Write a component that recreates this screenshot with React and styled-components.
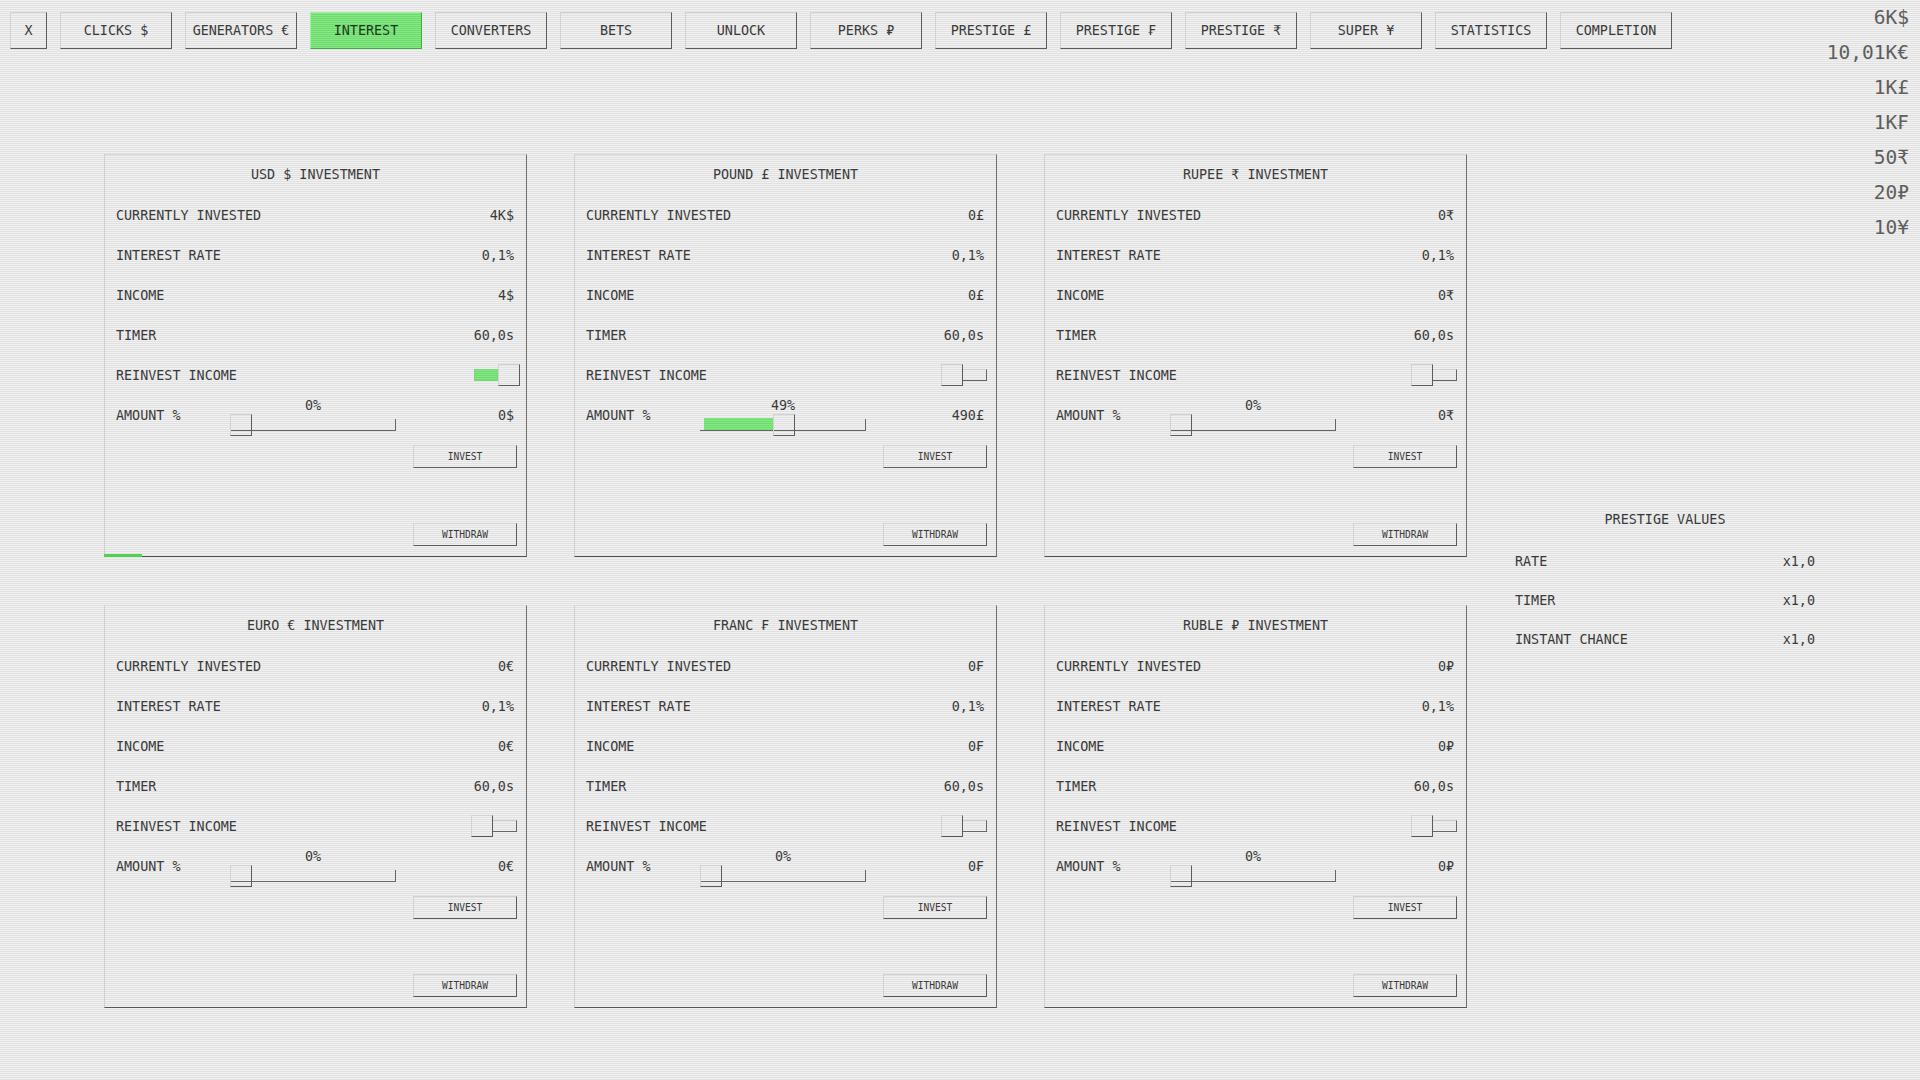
import React from "react";
import styled, { createGlobalStyle, css } from "styled-components";

const GlobalStyle = createGlobalStyle`
	html, body {
		margin: 0;
		padding: 0;
	}
	body {
		font-family: "DejaVu Sans Mono", "Liberation Mono", monospace;
		color: #3a3a3a;
		background: repeating-linear-gradient(
			to bottom,
			#f1f1f1 0px,
			#f1f1f1 1px,
			#e1e1e1 1px,
			#e1e1e1 2px
		);
		min-height: 100vh;
	}
`;

const bevel = css`
	border-top: 1px solid #d2d2d2;
	border-left: 1px solid #d2d2d2;
	border-right: 1px solid #5c5c5c;
	border-bottom: 1px solid #5c5c5c;
	box-sizing: border-box;
`;

const green = `repeating-linear-gradient(to bottom, #84e984 0px, #84e984 1px, #6fdb6f 1px, #6fdb6f 2px)`;

const Page = styled.div`
	display: flex;
	min-height: 1080px;
`;

const Main = styled.div`
	flex: 1;
	display: flex;
	flex-direction: column;
`;

const NavBar = styled.nav`
	display: flex;
	gap: 13px;
	padding: 12px 0 0 10px;
`;

const NavButton = styled.button`
	${bevel};
	width: ${props => props.$narrow ? '37px' : '112px'};
	height: 37px;
	padding: 0;
	font-family: inherit;
	font-size: 13.4px;
	color: #3a3a3a;
	background: ${props => props.$active ? green : 'transparent'};
	${props => props.$active && css`
		border-color: #9ef09e #3fae3f #3fae3f #9ef09e;
		color: #1c3a1c;
	`}
	cursor: pointer;
`;

const Content = styled.div`
	display: flex;
	align-items: center;
	margin-top: 105px;
	padding-left: 104px;
`;

const CardGrid = styled.div`
	display: grid;
	grid-template-columns: repeat(3, 423px);
	grid-auto-rows: 403px;
	column-gap: 47px;
	row-gap: 48px;
	flex-shrink: 0;
`;

const Card = styled.section`
	${bevel};
	border-top-color: #d8d8d8;
	border-left-color: #d0d0d0;
	border-right-color: #6e6e6e;
	border-bottom-color: #555;
	position: relative;
	display: flex;
	flex-direction: column;
	font-size: 13.4px;
`;

const CardTitle = styled.h4`
	margin: 0;
	height: 40px;
	line-height: 40px;
	text-align: center;
	font-weight: normal;
	font-size: 13.4px;
`;

const Row = styled.div`
	display: flex;
	justify-content: space-between;
	align-items: center;
	height: 40px;
	padding: 0 12px 0 11px;
`;

const AmountRow = styled.div`
	display: grid;
	grid-template-columns: 114px 166px 1fr;
	align-items: center;
	height: 40px;
	padding: 0 12px 0 11px;
`;

const Value = styled.span`
	text-align: right;
`;

const Toggle = styled.div`
	display: flex;
	align-items: center;
	width: 46px;
	height: 22px;
	margin-right: ${props => props.$on ? '-6px' : '-3px'};
	flex-direction: ${props => props.$on ? 'row' : 'row-reverse'};
`;

const ToggleTrack = styled.div`
	flex: 1;
	height: 12px;
	box-sizing: border-box;
	${props => props.$on
		? css`background: ${green}; border: 1px solid #7ad87a;`
		: css`border-top: 1px solid #cfcfcf; border-right: 1px solid #666; border-bottom: 1px solid #666;`}
`;

const Knob = styled.div`
	${bevel};
	width: 22px;
	height: 22px;
	flex-shrink: 0;
`;

const SliderBox = styled.div`
	display: flex;
	flex-direction: column;
	align-items: center;
	margin-top: 4px;
`;

const SliderPct = styled.span`
	line-height: 14px;
	height: 14px;
	margin-bottom: 1px;
`;

const Track = styled.div`
	position: relative;
	width: 166px;
	height: 22px;
`;

const TrackLine = styled.div`
	position: absolute;
	left: 0;
	right: 0;
	top: 5px;
	height: 12px;
	box-sizing: border-box;
	border-right: 1px solid #666;
	border-bottom: 1px solid #666;
`;

const TrackFill = styled.div`
	position: absolute;
	left: 4px;
	top: 4px;
	height: 12px;
	background: ${green};
`;

const SliderKnob = styled(Knob)`
	position: absolute;
	top: 0;
`;

const ButtonRow = styled.div`
	display: flex;
	justify-content: flex-end;
	padding-right: 9px;
	margin-top: ${props => props.$bottom ? 'auto' : '10px'};
	margin-bottom: ${props => props.$bottom ? '10px' : '0'};
`;

const SmallButton = styled.button`
	${bevel};
	width: 104px;
	height: 23px;
	padding: 0;
	background: transparent;
	font-family: inherit;
	font-size: 9.6px;
	color: #3a3a3a;
	cursor: pointer;
`;

const TimerBar = styled.div`
	position: absolute;
	left: -1px;
	bottom: -1px;
	height: 3px;
	background: #4fd24f;
`;

const PrestigePanel = styled.div`
	width: 320px;
	box-sizing: border-box;
	margin: 0 0 6px 38px;
	padding: 0 10px;
	font-size: 13.4px;
`;

const PanelTitle = styled.div`
	height: 44px;
	line-height: 44px;
	text-align: center;
`;

const PanelRow = styled.div`
	display: flex;
	justify-content: space-between;
	align-items: center;
	height: 39px;
`;

const Wallet = styled.aside`
	display: flex;
	flex-direction: column;
	align-items: flex-end;
	padding-right: 11px;
	font-size: 19.5px;
	color: #5e5e5e;
`;

const Coin = styled.div`
	line-height: 35px;
	height: 35px;
`;

const tabs = ['CLICKS $', 'GENERATORS €', 'INTEREST', 'CONVERTERS', 'BETS', 'UNLOCK', 'PERKS ₽', 'PRESTIGE £', 'PRESTIGE ₣', 'PRESTIGE ₹', 'SUPER ¥', 'STATISTICS', 'COMPLETION'];

const investments = [
	{ name: 'USD $', invested: '4K$', income: '4$', reinvest: true, pct: 0, amount: '0$', timer: 9 },
	{ name: 'POUND £', invested: '0£', income: '0£', reinvest: false, pct: 49, amount: '490£' },
	{ name: 'RUPEE ₹', invested: '0₹', income: '0₹', reinvest: false, pct: 0, amount: '0₹' },
	{ name: 'EURO €', invested: '0€', income: '0€', reinvest: false, pct: 0, amount: '0€' },
	{ name: 'FRANC ₣', invested: '0₣', income: '0₣', reinvest: false, pct: 0, amount: '0₣' },
	{ name: 'RUBLE ₽', invested: '0₽', income: '0₽', reinvest: false, pct: 0, amount: '0₽' },
];

const wallet = ['6K$', '10,01K€', '1K£', '1K₣', '50₹', '20₽', '10¥'];

function Slider({ pct }) {
	// knob travels over the inner part of the track
	let knobLeft = pct > 0 ? 4 + (166 - 26) * pct / 100 : 0;
	return (
		<SliderBox>
			<SliderPct>{pct}%</SliderPct>
			<Track>
				<TrackLine />
				{pct > 0 ? <TrackFill style={{ width: (knobLeft - 4) + 'px' }} /> : null}
				<SliderKnob style={{ left: knobLeft + 'px' }} />
			</Track>
		</SliderBox>
	);
}

function InvestmentCard({ item }) {
	return (
		<Card>
			<CardTitle>{item.name} INVESTMENT</CardTitle>
			<Row><span>CURRENTLY INVESTED</span><Value>{item.invested}</Value></Row>
			<Row><span>INTEREST RATE</span><Value>0,1%</Value></Row>
			<Row><span>INCOME</span><Value>{item.income}</Value></Row>
			<Row><span>TIMER</span><Value>60,0s</Value></Row>
			<Row>
				<span>REINVEST INCOME</span>
				<Toggle $on={item.reinvest}>
					<ToggleTrack $on={item.reinvest} />
					<Knob />
				</Toggle>
			</Row>
			<AmountRow>
				<span>AMOUNT %</span>
				<Slider pct={item.pct} />
				<Value>{item.amount}</Value>
			</AmountRow>
			<ButtonRow><SmallButton>INVEST</SmallButton></ButtonRow>
			<ButtonRow $bottom><SmallButton>WITHDRAW</SmallButton></ButtonRow>
			{item.timer ? <TimerBar style={{ width: item.timer + '%' }} /> : null}
		</Card>
	);
}

export default function App() {
	return (
		<Page>
			<GlobalStyle />
			<Main>
				<NavBar>
					<NavButton $narrow>X</NavButton>
					{tabs.map(tab => (
						<NavButton key={tab} $active={tab === 'INTEREST'}>{tab}</NavButton>
					))}
				</NavBar>
				<Content>
					<CardGrid>
						{investments.map(item => <InvestmentCard key={item.name} item={item} />)}
					</CardGrid>
					<PrestigePanel>
						<PanelTitle>PRESTIGE VALUES</PanelTitle>
						<PanelRow><span>RATE</span><span>x1,0</span></PanelRow>
						<PanelRow><span>TIMER</span><span>x1,0</span></PanelRow>
						<PanelRow><span>INSTANT CHANCE</span><span>x1,0</span></PanelRow>
					</PrestigePanel>
				</Content>
			</Main>
			<Wallet>
				{wallet.map(w => <Coin key={w}>{w}</Coin>)}
			</Wallet>
		</Page>
	);
}
